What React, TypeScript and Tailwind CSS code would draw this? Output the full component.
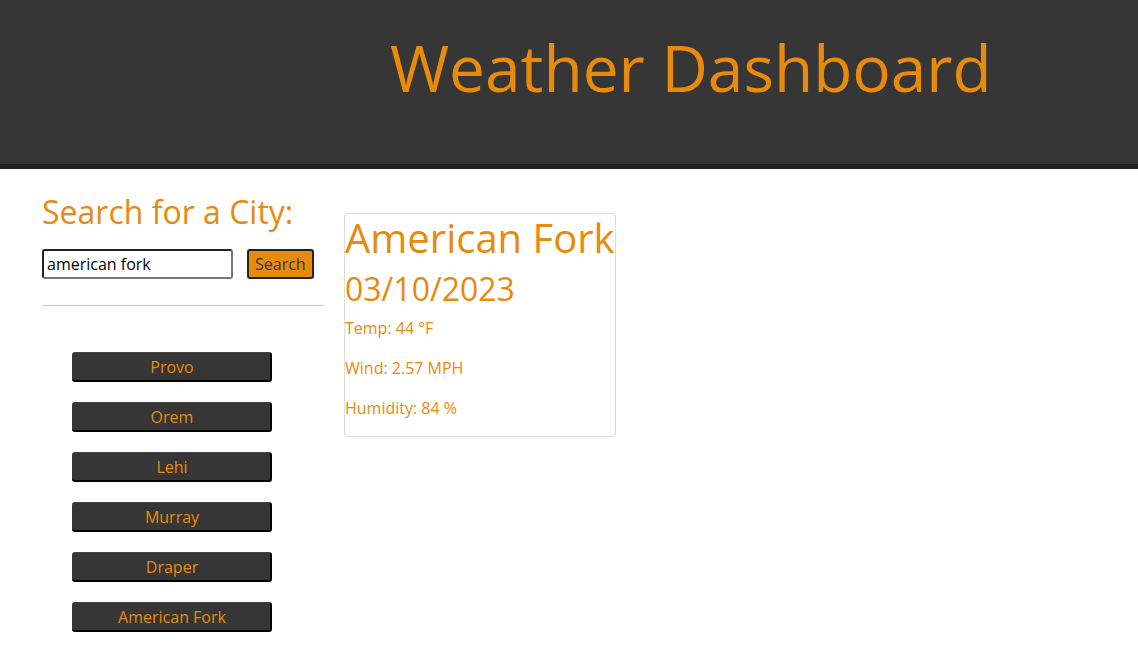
const cities = ['Provo', 'Orem', 'Lehi', 'Murray', 'Draper', 'American Fork'];

export default function App() {
  return (
    <div className="min-h-screen bg-white font-['Open_Sans',sans-serif] text-[#e88a0b]">
      {/* Header */}
      <header className="h-[169px] bg-[#363636] border-b-[5px] border-[#1e2226] flex items-start pt-[30px] pl-[390px]">
        <h1 className="text-[64px] leading-[1.2]">Weather Dashboard</h1>
      </header>

      <main className="flex gap-5 pl-[42px] pt-[24px]">
        {/* Search column */}
        <aside className="w-[282px]">
          <h2 className="text-[32px] leading-[1.2] mb-[18px]">Search for a City:</h2>
          <div className="flex items-center gap-[14px]">
            <input
              defaultValue="american fork"
              className="w-[191px] h-[30px] px-[3px] border-2 border-[#222] border-r-[#777] border-b-[#777] rounded-[3px] text-black text-base outline-none"
            />
            <button className="h-[30px] px-[6px] bg-[#e88a0b] border-2 border-[#222] rounded-[3px] text-[#333] text-base">
              Search
            </button>
          </div>
          <hr className="mt-[26px] border-t border-[#ccc]" />
          <div className="flex flex-col gap-5 pl-[30px] pt-[46px]">
            {cities.map(city => (
              <button
                key={city}
                className="w-[200px] h-[30px] bg-[#363636] rounded-[3px] border-t border-t-[#444] border-b-2 border-r-2 border-black pl-[2px] text-base text-[#e88a0b]"
              >
                {city}
              </button>
            ))}
          </div>
        </aside>

        {/* Current weather */}
        <section className="self-start mt-[20px] border border-[#ddd] rounded-[3px] pb-[8px]">
          <h2 className="text-[40px] leading-[1.2]">American Fork</h2>
          <h3 className="text-[32px] leading-[1.2] mt-[8px]">03/10/2023</h3>
          <p className="text-base mt-[8px]">Temp: 44 °F</p>
          <p className="text-base mt-4">Wind: 2.57 MPH</p>
          <p className="text-base mt-4 mb-[8px]">Humidity: 84 %</p>
        </section>
      </main>
    </div>
  );
}
